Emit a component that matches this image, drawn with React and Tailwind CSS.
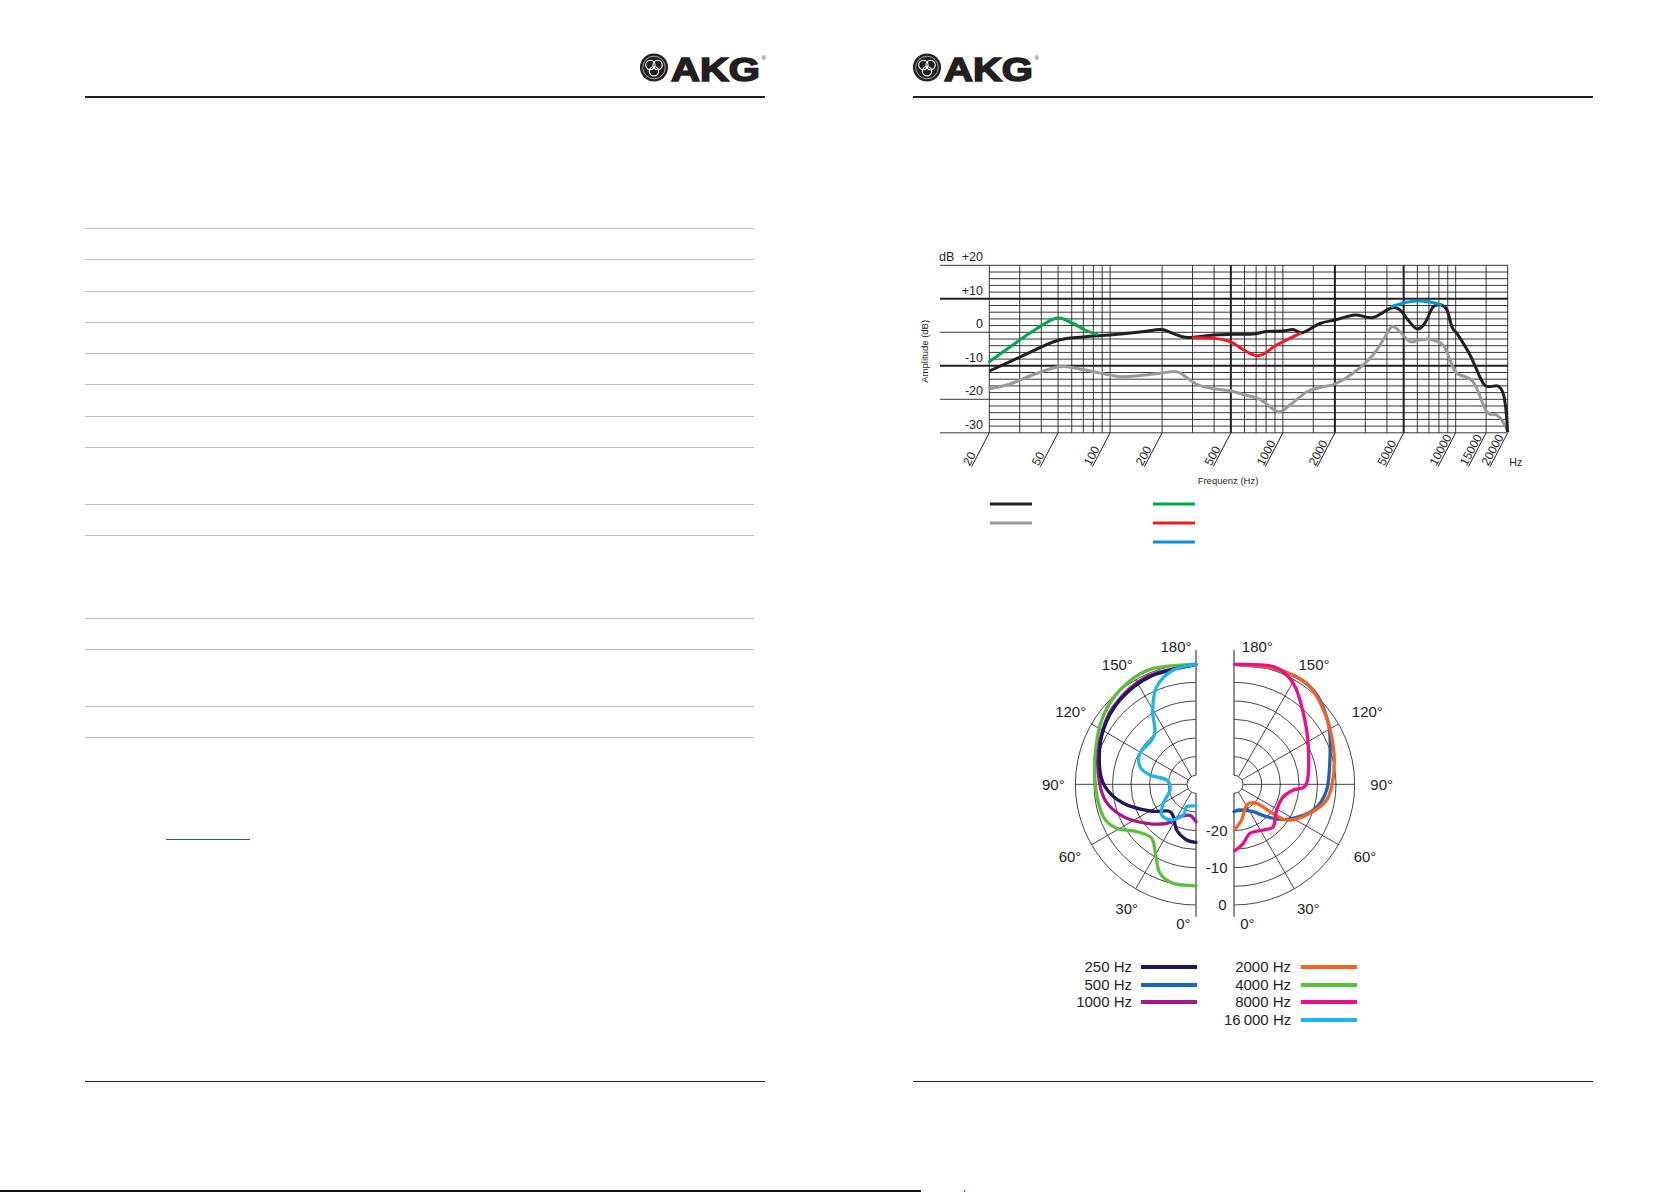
import React from "react";

const FONT = "'Liberation Sans', Arial, sans-serif";
const INK = "#231f20";

// turn a list of points into a smooth cubic path (catmull-rom)
const smooth = (pts) => {
  let d = `M${pts[0][0]},${pts[0][1]}`;
  for (let i = 0; i < pts.length - 1; i++) {
    const p0 = pts[i - 1] || pts[i];
    const p1 = pts[i];
    const p2 = pts[i + 1];
    const p3 = pts[i + 2] || p2;
    const c1 = [p1[0] + (p2[0] - p0[0]) / 6, p1[1] + (p2[1] - p0[1]) / 6];
    const c2 = [p2[0] - (p3[0] - p1[0]) / 6, p2[1] - (p3[1] - p1[1]) / 6];
    d += ` C${c1[0].toFixed(1)},${c1[1].toFixed(1)} ${c2[0].toFixed(1)},${c2[1].toFixed(1)} ${p2[0]},${p2[1]}`;
  }
  return d;
};

const Logo = () => (
  <svg width="128" height="38" viewBox="0 0 128 38" className="block overflow-visible">
    <circle cx="14" cy="20.5" r="14" fill={INK} />
    <circle cx="14" cy="20.5" r="11.3" fill="none" stroke="#fff" strokeWidth="0.6" />
    <circle cx="10.4" cy="18" r="4.7" fill="none" stroke="#fff" strokeWidth="1.1" />
    <circle cx="17.6" cy="18" r="4.7" fill="none" stroke="#fff" strokeWidth="1.1" />
    <circle cx="14" cy="24.2" r="4.7" fill="none" stroke="#fff" strokeWidth="1.1" />
    <text
      x="31"
      y="33.5"
      fontFamily={FONT}
      fontWeight="700"
      fontSize="34"
      fill={INK}
      stroke={INK}
      strokeWidth="1.6"
      textLength="89"
      lengthAdjust="spacingAndGlyphs"
    >
      AKG
    </text>
    <text x="121.5" y="13" fontFamily={FONT} fontSize="6" fill={INK}>
      ®
    </text>
  </svg>
);

const fx = (f) => 989.3 + 172.8 * Math.log10(f / 20);
const dy = (db) => 332.3 - 3.35 * db;

const gridFreqs = [
  20, 30, 40, 50, 60, 70, 80, 90, 100, 200, 300, 400, 500, 600, 700, 800, 900,
  1000, 1500, 2000, 3000, 4000, 5000, 6000, 7000, 8000, 9000, 10000, 15000, 20000,
];
const thickFreqs = [500, 2000, 5000];
const freqLabels = [20, 50, 100, 200, 500, 1000, 2000, 5000, 10000, 15000, 20000];
const dbLabels = [
  [20, "+20"],
  [10, "+10"],
  [0, "0"],
  [-10, "-10"],
  [-20, "-20"],
  [-30, "-30"],
];

const black = [
  [989.3, 371], [1020, 357], [1056, 341], [1083, 337], [1110, 335], [1140, 332],
  [1161, 329.5], [1172, 333], [1187, 337.5], [1213, 335], [1233, 334.3], [1253, 334],
  [1266, 331.5], [1283, 331], [1293, 329.5], [1303, 332.5], [1320, 323.5], [1335, 320],
  [1355, 315], [1373, 317.5], [1391, 308], [1400, 310], [1408, 320], [1417, 329],
  [1425, 323], [1433, 307], [1441, 305], [1447, 310], [1452, 327], [1458, 335],
  [1470, 355], [1483, 383], [1490, 386.5], [1498, 386], [1503, 393], [1506, 410],
  [1507.5, 432],
];
const grey = [
  [989.3, 389], [1010, 384], [1035, 374], [1056.7, 367], [1067, 366.7], [1090, 371],
  [1120, 376.7], [1140, 375.5], [1160, 373.3], [1177, 371.7], [1190, 380], [1200, 385.7],
  [1215, 389], [1230, 390.7], [1245, 395], [1260, 399.3], [1278, 411.7], [1290, 405],
  [1307, 391.7], [1322, 387], [1335, 384], [1353, 373.3], [1373, 355], [1385, 337],
  [1392, 326.7], [1400, 331.7], [1410, 341.7], [1420, 340], [1430, 339.3], [1443, 345],
  [1450, 360], [1457, 373.3], [1473, 381.7], [1486.7, 411.7], [1496.7, 415], [1503, 422],
  [1508.3, 432.7],
];
const green = [[989.3, 361.7], [1010, 347], [1030, 333], [1055, 318.5], [1070, 322], [1085, 330], [1097, 334.3]];
const red = [[1193.3, 337.7], [1213.3, 338.3], [1230, 341.7], [1256.7, 355.7], [1276.7, 345], [1300, 333.3]];
const blue = [[1392, 306.5], [1405, 302.5], [1417, 301], [1430, 302], [1441, 304.5]];

const ResponseChart = () => {
  const hLines = [];
  for (let db = 20; db >= -30; db -= 2) hLines.push(db);
  return (
    <svg width="680" height="330" viewBox="913 240 680 330" className="block" fontFamily={FONT}>
      {gridFreqs.map((f) => (
        <line
          key={f}
          x1={fx(f)}
          x2={fx(f)}
          y1={265.3}
          y2={432.8}
          stroke={INK}
          strokeWidth={thickFreqs.includes(f) ? 2 : 0.9}
        />
      ))}
      {hLines.map((db) => (
        <line
          key={db}
          x1={db % 10 === 0 ? 940 : 989.3}
          x2={1508}
          y1={dy(db)}
          y2={dy(db)}
          stroke={INK}
          strokeWidth={db === 10 || db === -10 ? 2 : 0.9}
        />
      ))}
      <text x="939" y="260.5" fontSize="12.5" fill={INK}>dB</text>
      {dbLabels.map(([db, t]) => (
        <text key={t} x="983" y={dy(db) - 4} fontSize="12.5" fill={INK} textAnchor="end">
          {t}
        </text>
      ))}
      <text x="928" y="351.3" fontSize="9.5" fill={INK} textAnchor="middle" transform="rotate(-90 928 351.3)">
        Amplitude (dB)
      </text>
      {freqLabels.map((f) => {
        const x = fx(f);
        return (
          <g key={f}>
            <line x1={x} y1={432.8} x2={x - 17.7} y2={466.7} stroke={INK} strokeWidth="1" />
            <text
              x={x - 19.5}
              y={466.5}
              fontSize="12"
              fill={INK}
              transform={`rotate(-62 ${x - 19.5} 466.5)`}
            >
              {f}
            </text>
          </g>
        );
      })}
      <text x="1509.3" y="466" fontSize="10.5" fill={INK}>Hz</text>
      <text x="1228" y="484" fontSize="9.5" fill={INK} textAnchor="middle">Frequenz (Hz)</text>

      <path d={smooth(grey)} fill="none" stroke="#9a9a9a" strokeWidth="3" strokeLinejoin="round" />
      <path d={smooth(black)} fill="none" stroke={INK} strokeWidth="3" strokeLinejoin="round" />
      <path d={smooth(green)} fill="none" stroke="#00a651" strokeWidth="3" strokeLinecap="round" />
      <path d={smooth(red)} fill="none" stroke="#ed1c24" strokeWidth="3" strokeLinecap="round" />
      <path d={smooth(blue)} fill="none" stroke="#0095da" strokeWidth="3" strokeLinecap="round" />

      <line x1="990" x2="1032" y1="504" y2="504" stroke={INK} strokeWidth="3" />
      <line x1="990" x2="1032" y1="523" y2="523" stroke="#999" strokeWidth="3" />
      <line x1="1153" x2="1195" y1="504" y2="504" stroke="#00a651" strokeWidth="3" />
      <line x1="1153" x2="1195" y1="523" y2="523" stroke="#ed1c24" strokeWidth="3" />
      <line x1="1153" x2="1195" y1="542" y2="542" stroke="#0095da" strokeWidth="3" />
    </svg>
  );
};

// polar plot drawn in its own units (3 units = 1px)
const CL = [468, 463];
const CR = [582, 463];
const rings = [362, 306, 250, 195, 139, 83];
const HOLE = 27;

const polarCurves = [
  {
    color: "#5cbf3c",
    pts: [[468, 103], [330, 118], [240, 180], [185, 270], [165, 380], [168, 480], [190, 560], [230, 595], [290, 605], [335, 625], [348, 680], [360, 730], [400, 760], [468, 768]],
  },
  {
    color: "#a3198f",
    pts: [[468, 103], [320, 140], [220, 230], [180, 330], [175, 430], [195, 510], [250, 560], [320, 580], [380, 580], [420, 560], [450, 556], [468, 575]],
  },
  {
    color: "#1c1a5c",
    pts: [[468, 103], [330, 140], [240, 210], [190, 300], [178, 400], [195, 470], [250, 520], [330, 543], [385, 543], [400, 560], [410, 600], [440, 630], [468, 637]],
  },
  {
    color: "#1eb4ec",
    pts: [[468, 103], [400, 120], [350, 170], [338, 240], [345, 300], [335, 330], [300, 370], [300, 410], [330, 435], [380, 450], [390, 480], [370, 520], [365, 555], [395, 570], [430, 555], [440, 530], [468, 528]],
  },
  {
    color: "#1f64b4",
    pts: [[585, 103], [720, 120], [820, 180], [865, 280], [870, 380], [860, 480], [820, 540], [740, 568], [680, 560], [640, 545], [600, 540], [582, 545]],
  },
  {
    color: "#f26424",
    pts: [[585, 103], [700, 115], [800, 160], [855, 250], [880, 350], [880, 440], [860, 510], [800, 555], [740, 570], [690, 545], [650, 520], [620, 525], [605, 570], [585, 598]],
  },
  {
    color: "#ec0e8c",
    pts: [[585, 103], [700, 110], [760, 160], [790, 250], [805, 350], [800, 460], [760, 480], [730, 500], [710, 540], [700, 590], [670, 600], [630, 610], [610, 640], [585, 662]],
  },
];

const HalfGrid = ({ c, side }) => {
  const [cx, cy] = c;
  const s = side;
  const sweep = s < 0 ? 0 : 1;
  return (
    <g fill="none" stroke={INK}>
      {rings.map((r) => (
        <path key={r} d={`M${cx},${cy - r} A${r},${r} 0 0,${sweep} ${cx},${cy + r}`} strokeWidth="2.5" />
      ))}
      <path d={`M${cx},${cy - HOLE} A${HOLE},${HOLE} 0 0,${sweep} ${cx},${cy + HOLE}`} strokeWidth="2.5" />
      {[30, 60, 90, 120, 150].map((a) => {
        const t = (a * Math.PI) / 180;
        return (
          <line
            key={a}
            x1={cx + s * HOLE * Math.sin(t)}
            y1={cy + HOLE * Math.cos(t)}
            x2={cx + s * 362 * Math.sin(t)}
            y2={cy + 362 * Math.cos(t)}
            strokeWidth="2.5"
          />
        );
      })}
      <line x1={cx} x2={cx} y1={60} y2={cy - HOLE} stroke="#555" strokeWidth="4" />
      <line x1={cx} x2={cx} y1={cy + HOLE} y2={860} stroke="#555" strokeWidth="4" />
    </g>
  );
};

const polarLabels = [
  ["180°", 408, 50], ["150°", 232, 105], ["120°", 92, 245], ["90°", 40, 465],
  ["60°", 90, 680], ["30°", 260, 835], ["0°", 430, 880],
  ["180°", 652, 50], ["150°", 822, 105], ["120°", 982, 245], ["90°", 1025, 465],
  ["60°", 975, 680], ["30°", 805, 835], ["0°", 622, 880],
  ["-20", 530, 603], ["-10", 530, 713], ["0", 547, 825],
];

const PolarChart = () => (
  <svg width="380" height="320" viewBox="0 0 1140 960" className="block" fontFamily={FONT}>
    <HalfGrid c={CL} side={-1} />
    <HalfGrid c={CR} side={1} />
    {polarCurves.map((c) => (
      <path key={c.color} d={smooth(c.pts)} fill="none" stroke={c.color} strokeWidth="10" strokeLinecap="round" strokeLinejoin="round" />
    ))}
    {polarLabels.map(([t, x, y], i) => (
      <text key={i} x={x} y={y + 16} fontSize="45" fill={INK} textAnchor="middle">
        {t}
      </text>
    ))}
  </svg>
);

const legendLeft = [
  ["250 Hz", "bg-[#1c1a5c]"],
  ["500 Hz", "bg-[#1f64b4]"],
  ["1000 Hz", "bg-[#a3198f]"],
];
const legendRight = [
  ["2000 Hz", "bg-[#f26424]"],
  ["4000 Hz", "bg-[#5cbf3c]"],
  ["8000 Hz", "bg-[#ec0e8c]"],
  ["16\u2009000 Hz", "bg-[#1eb4ec]"],
];

const PolarLegend = () => (
  <div className="mt-[8px] ml-[162px] flex gap-[27px] text-[15px] leading-[17.7px] text-[#231f20] font-['Liberation_Sans',Arial,sans-serif]">
    <div className="grid grid-cols-[57px_56px] gap-x-[9px] items-center self-start">
      {legendLeft.map(([label, bg]) => (
        <React.Fragment key={label}>
          <span className="text-right whitespace-nowrap">{label}</span>
          <span className={`block h-[4px] ${bg}`} />
        </React.Fragment>
      ))}
    </div>
    <div className="grid grid-cols-[67px_56px] gap-x-[10px] items-center">
      {legendRight.map(([label, bg]) => (
        <React.Fragment key={label}>
          <span className="text-right whitespace-nowrap">{label}</span>
          <span className={`block h-[4px] ${bg}`} />
        </React.Fragment>
      ))}
    </div>
  </div>
);

const rowHeights = [31, 32, 31, 31, 31, 32, 31, 57, 31, 83, 31, 57, 31];

const LeftPage = () => (
  <div className="ml-[85px] w-[680px] flex flex-col">
    <div className="h-[96px] pt-[47px] flex justify-end">
      <div className="-mr-[3px]">
        <Logo />
      </div>
    </div>
    <div className="h-[1.5px] bg-[#231f20]" />
    <div className="mt-[130.5px] w-[669px]">
      {rowHeights.map((h, i) => (
        <div key={i} className="border-t border-[#bdbdbd]" style={{ height: h }} />
      ))}
      <div className="border-t border-[#bdbdbd]" />
    </div>
    <div className="mt-[101px] ml-[81px] w-[84px] h-px bg-[#2f5597]" />
    <div className="mt-auto mb-[107px] h-[1.5px] bg-[#231f20]" />
  </div>
);

const RightPage = () => (
  <div className="ml-[148px] w-[680px] flex flex-col">
    <div className="h-[96px] pt-[47px] flex justify-start">
      <Logo />
    </div>
    <div className="h-[1.5px] bg-[#231f20]" />
    <div className="mt-[142.5px]">
      <ResponseChart />
    </div>
    <div className="mt-[60px] ml-[127px]">
      <PolarChart />
    </div>
    <PolarLegend />
    <div className="mt-auto mb-[107px] h-[1.5px] bg-[#231f20]" />
  </div>
);

export default function App() {
  return (
    <div className="w-[1679px] h-[1192px] bg-white flex flex-col overflow-hidden">
      <div className="flex flex-1">
        <LeftPage />
        <RightPage />
      </div>
      <div className="h-[3px] flex items-end">
        <div className="w-[921px] h-[2px] bg-[#111]" />
        <div className="ml-[43px] w-px h-[2px] bg-[#e0202a]" />
      </div>
    </div>
  );
}
